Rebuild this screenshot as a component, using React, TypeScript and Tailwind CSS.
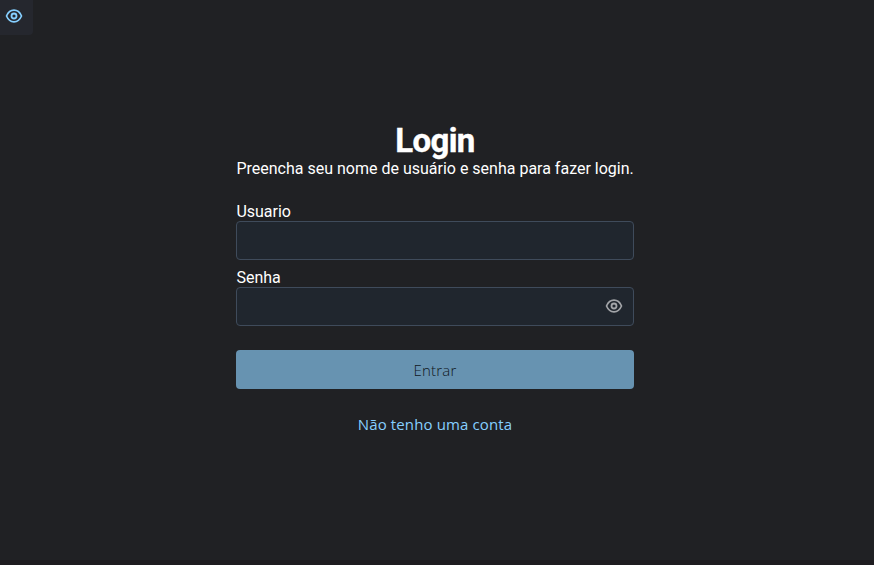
function Eye({ className }: { className?: string }) {
  return (
    <svg viewBox="0 0 18 16" fill="none" stroke="currentColor" className={className}>
      <path d="M1.5 8C2.8 5 5.5 2.2 9 2.2S15.2 5 16.5 8C15.2 11 12.5 13.8 9 13.8S2.8 11 1.5 8Z" strokeWidth="1.7" strokeLinejoin="round" />
      <circle cx="9" cy="8" r="2.5" strokeWidth="1.8" />
    </svg>
  );
}

export default function App() {
  return (
    <main className="relative flex h-[565px] w-full flex-col items-center border-b-[5px] border-[#1e1c20] bg-[#202124] pt-[121px] font-[Roboto,sans-serif] text-base text-white">
      <button className="absolute left-0 top-0 flex h-[35px] w-[33px] items-center rounded-br-sm bg-[#25272e] pb-[3px] pl-[4.6px] text-[#86cfff]" aria-label="Visualizar">
        <Eye className="h-4 w-[18px]" />
      </button>
      <form className="mr-1 flex w-[398px] flex-col" onSubmit={(e) => e.preventDefault()}>
        <h1 className="h-[38px] text-center text-[33px] font-bold leading-[39px] tracking-[-0.6px] [-webkit-text-stroke:0.4px_white]">Login</h1>
        <p className="whitespace-nowrap pl-[0.4px] leading-[19px]">Preencha seu nome de usuário e senha para fazer login.</p>
        <label htmlFor="user" className="mt-6 pl-[0.4px] leading-[19px]">Usuario</label>
        <input id="user" className="h-[39px] rounded-[4px] border border-[#3f4b5b] bg-[#20262e] px-3 outline-none" />
        <label htmlFor="pass" className="mt-2 pl-[0.4px] leading-[19px]">Senha</label>
        <div className="flex h-[39px] items-center rounded-[4px] border border-[#3f4b5b] bg-[#20262e] pr-[10.5px]">
          <input id="pass" type="password" className="min-w-0 flex-1 bg-transparent px-3 outline-none" />
          <Eye className="mb-px h-4 w-[18px] text-[#a2a4a8]" />
        </div>
        <button className="mt-6 h-[39px] rounded-[4px] bg-[#6793b1] pt-[2px] font-['Open_Sans','Noto_Sans',sans-serif] text-[15px] font-light tracking-[0.2px] text-[#10171d]">Entrar</button>
        <a className="mt-[23px] self-center font-['Open_Sans','Noto_Sans',sans-serif] text-[15px] leading-6 tracking-[0.12px] text-[#86cfff]">Não tenho uma conta</a>
      </form>
    </main>
  );
}
